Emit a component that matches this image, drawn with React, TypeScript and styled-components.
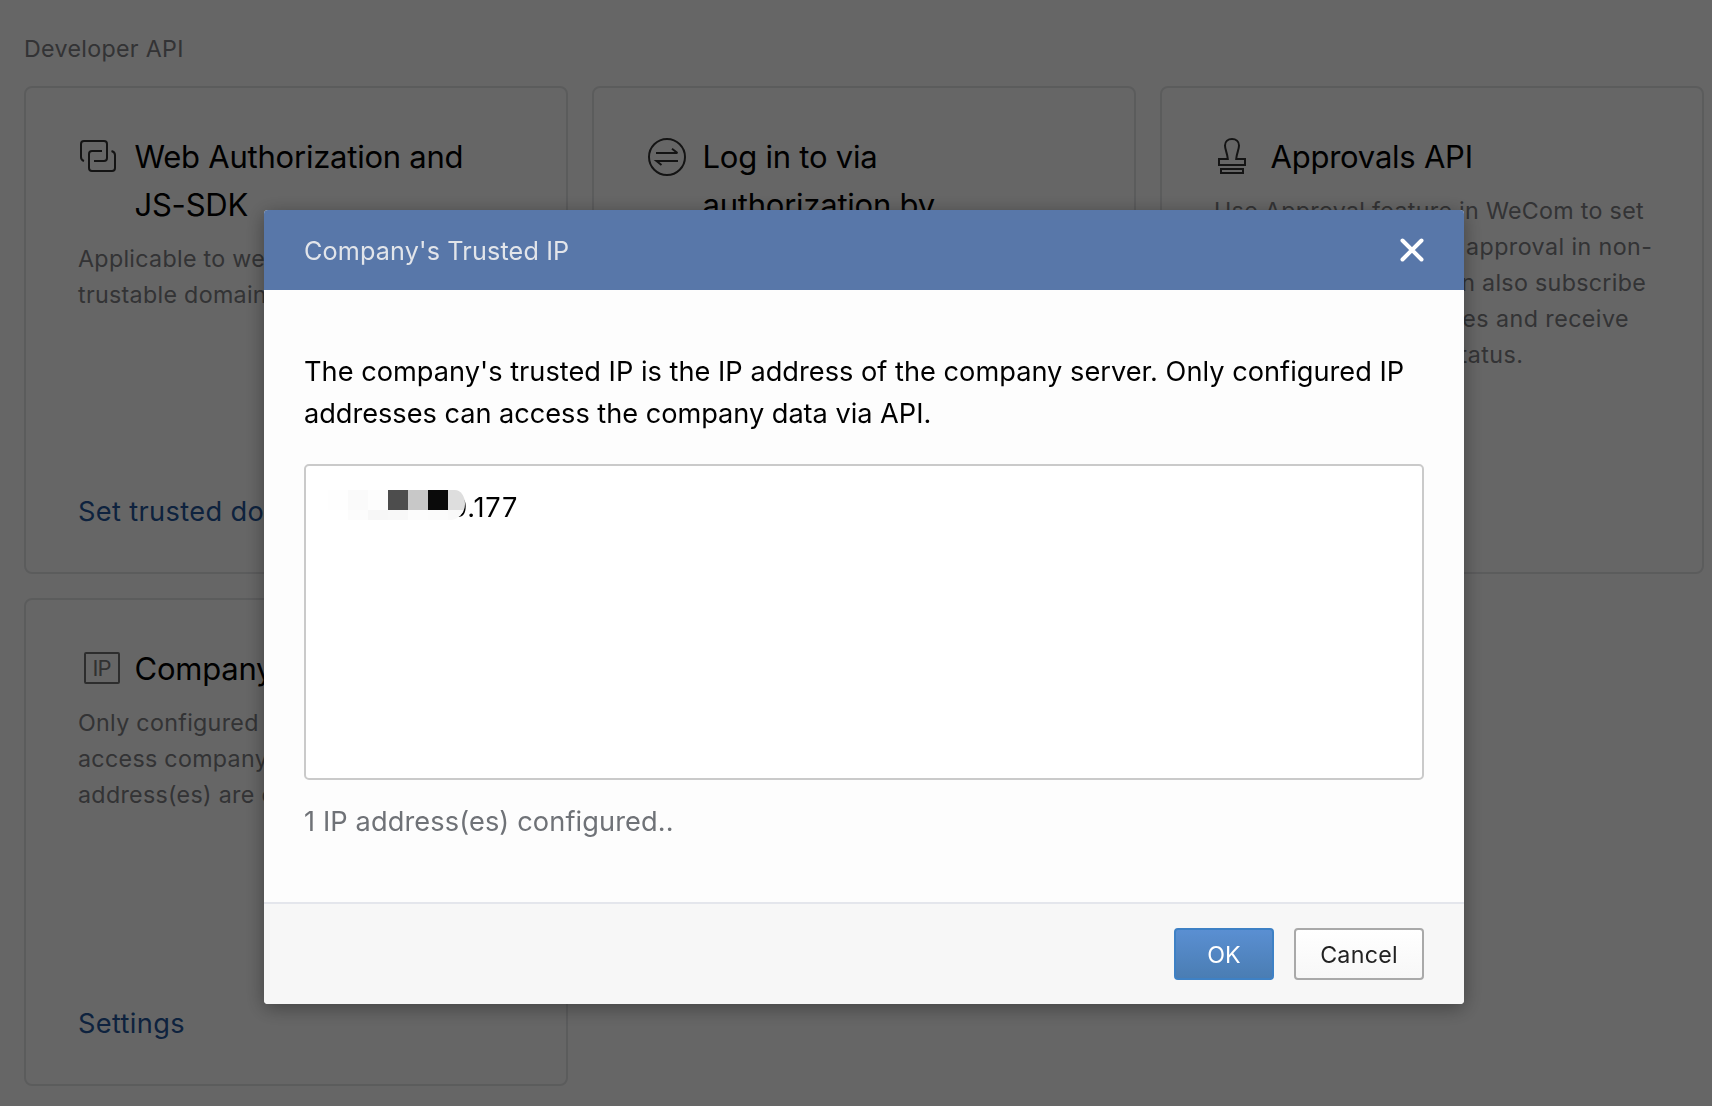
import React from "react";
import styled, { createGlobalStyle } from "styled-components";

const GlobalStyle = createGlobalStyle`
  *, *::before, *::after { box-sizing: border-box; }
  html, body { margin: 0; padding: 0; background: #fff; overflow: hidden; }
  body { font-family: Inter, "Liberation Sans", sans-serif; color: #000; }
  p, h1, h2, h3 { margin: 0; font-weight: 400; }
`;

const Page = styled.main`
  height: 1106px;
  padding: 31px 8px 0 24px;
  overflow: hidden;
`;

const SectionTitle = styled.h1`
  height: 36px;
  margin-bottom: 19px;
  font-size: 23.25px;
  line-height: 36px;
  letter-spacing: 0.3px;
  color: #808184;
`;

const CardGrid = styled.div`
  display: grid;
  grid-template-columns: repeat(3, 544px);
  grid-auto-rows: 488px;
  gap: 24px;
`;

const Card = styled.section`
  display: flex;
  flex-direction: column;
  padding: 45px 50px 40px 52px;
  border: 2px solid #e4e5e7;
  border-radius: 8px;
`;

const CardHead = styled.div`
  display: flex;
  align-items: flex-start;
  gap: 16px;
  margin-bottom: 12px;
`;

const IconSvg = styled.svg`
  flex: none;
  width: 40px;
  height: 40px;
  margin-top: 3px;
  fill: none;
  stroke: #333;
  stroke-width: 2;
`;

const IpBadge = styled.span`
  flex: none;
  display: flex;
  align-items: center;
  justify-content: center;
  width: 36px;
  height: 32px;
  margin: 7px -2px 0 6px;
  padding-right: 1px;
  border: 2px solid #727272;
  border-radius: 2px;
  font-size: 22px;
  letter-spacing: -1px;
  color: #7c7c7c;
`;

const CardTitle = styled.h2`
  padding-left: 0.5px;
  font-size: 31px;
  line-height: 48px;
  letter-spacing: -0.23px;
  white-space: nowrap;
`;

const Description = styled.p`
  font-size: 23.25px;
  line-height: 36px;
  letter-spacing: 0.3px;
  white-space: nowrap;
  color: #808184;
`;

const Line = styled.span<{ $spacing?: number }>`
  display: block;
  letter-spacing: ${(p) => (p.$spacing === undefined ? "inherit" : `${p.$spacing}px`)};
`;

const CardLink = styled.a`
  margin-top: auto;
  font-size: 27.2px;
  line-height: 40px;
  letter-spacing: 0.36px;
  white-space: nowrap;
  color: #25569b;
`;

const Overlay = styled.div`
  position: fixed;
  inset: 0;
  display: flex;
  justify-content: center;
  align-items: flex-start;
  padding: 210px 0 0 16px;
  background: rgba(0, 0, 0, 0.6);
`;

const Dialog = styled.div`
  width: 1200px;
  border-radius: 4px;
  overflow: hidden;
  background: #fdfdfd;
  box-shadow: 0 4px 20px rgba(0, 0, 0, 0.36);
`;

const DialogHeader = styled.header`
  display: flex;
  align-items: center;
  justify-content: space-between;
  height: 80px;
  padding: 0 40px;
  background: #5877a9;
`;

const DialogTitle = styled.h2`
  padding-top: 2px;
  font-size: 25.2px;
  letter-spacing: 0.14px;
  color: #e2e5ea;
`;

const CloseButton = styled.button`
  display: flex;
  padding: 0;
  border: 0;
  background: none;
`;

const DialogBody = styled.div`
  height: 612px;
  padding: 61px 40px 0;
`;

const Intro = styled.p`
  font-size: 27.2px;
  line-height: 42px;
  white-space: nowrap;
`;

const IpField = styled.div`
  display: flex;
  height: 316px;
  margin: 29px 0 21px;
  padding: 24px 22px;
  border: 2px solid #cacaca;
  border-radius: 5px;
  background: #fff;
`;

const Masked = styled.span`
  display: grid;
  grid-template-columns: repeat(7, 20px);
  grid-template-rows: 20px 10px;
  width: 137px;
  height: 30px;
  border-radius: 0 10px 15px 0 / 0 14px 16px 0;
  overflow: hidden;
  z-index: 1;
`;

const Cell = styled.i<{ $tone: string }>`
  background: ${(p) => p.$tone};
`;

const IpTail = styled.span`
  margin: 1px 0 0 -14.5px;
  font-size: 27.2px;
  line-height: 34px;
  letter-spacing: 0.7px;
`;

const Hint = styled.p`
  font-size: 27.2px;
  line-height: 42px;
  letter-spacing: 0.11px;
  color: #6f7277;
`;

const DialogFooter = styled.footer`
  display: flex;
  justify-content: flex-end;
  gap: 20px;
  height: 102px;
  padding: 24px 40px;
  border-top: 2px solid #e4e6ec;
  background: #f7f7f7;
`;

const Button = styled.button<{ $primary?: boolean }>`
  width: ${(p) => (p.$primary ? 100 : 130)}px;
  height: 52px;
  padding: 0;
  border: 2px solid ${(p) => (p.$primary ? "#3e81c5" : "#a9a9a9")};
  border-radius: 4px;
  background: ${(p) =>
    p.$primary ? "linear-gradient(#5a8fd2, #4a7db3)" : "linear-gradient(#fff, #f7f7f7)"};
  color: ${(p) => (p.$primary ? "#fff" : "#222")};
  font-family: inherit;
  font-size: 23.25px;
  letter-spacing: ${(p) => (p.$primary ? 0 : 0.25)}px;
`;

const MASK_TONES = [
  "#fefefe", "#fafafa", "#fdfdfd", "#4d4d4d", "#c8c8c8", "#0a0a0a", "#dedede",
  "#ffffff", "#fcfcfc", "#f7f7f7", "#f8f8f8", "#fcfcfc", "#fbfbfb", "#f9f9f9",
];

const LinkedSquaresIcon = () => (
  <IconSvg viewBox="0 0 40 40">
    <path d="M6 25 Q3 24 3 21 V8 Q3 5 6 5 H26 Q29 5 29 8 V22 Q29 25 26 25 H16" />
    <path d="M24 15 H14 Q11 15 11 18 V32 Q11 35 14 35 H34 Q37 35 37 32 V19 Q37 16 33.5 15" />
  </IconSvg>
);

const SwapIcon = () => (
  <IconSvg viewBox="0 0 40 40">
    <circle cx="21" cy="21" r="18" />
    <path d="M10 17 H31.5 M26 12.8 L31.5 17 M32 25 H10.5 L15.5 29" />
  </IconSvg>
);

const StampIcon = () => (
  <IconSvg viewBox="0 0 40 40">
    <path d="M13.8 23 C13.4 17.5 11 13.5 11 9.5 C11 5.5 14 3 18 3 C22 3 25 5.5 25 9.5 C25 13.5 22.6 17.5 22.2 23 H31 V29 H5 V23 Z" />
    <path d="M7 33 H29 V37 H7 Z" />
  </IconSvg>
);

const CloseIcon = () => (
  <svg width="24" height="24" viewBox="0 0 24 24" stroke="#fff" strokeWidth="4" strokeLinecap="round">
    <path d="M2.5 2.5 L21.5 21.5 M21.5 2.5 L2.5 21.5" />
  </svg>
);

export default function App() {
  return (
    <>
      <GlobalStyle />
      <Page>
        <SectionTitle>Developer API</SectionTitle>
        <CardGrid>
          <Card>
            <CardHead>
              <LinkedSquaresIcon />
              <CardTitle>Web Authorization and<br />JS-SDK</CardTitle>
            </CardHead>
            <Description>Applicable to web pages with<br />trustable domains.</Description>
            <CardLink>Set trusted domain</CardLink>
          </Card>
          <Card>
            <CardHead>
              <SwapIcon />
              <CardTitle>Log in to via<br />authorization by</CardTitle>
            </CardHead>
          </Card>
          <Card>
            <CardHead>
              <StampIcon />
              <CardTitle>Approvals API</CardTitle>
            </CardHead>
            <Description>
              <Line>Use Approval feature in WeCom to set</Line>
              <Line $spacing={0.42}>up and operate forms approval in non-</Line>
              <Line>WeCom apps.{"\u00a0"} You can also subscribe</Line>
              <Line $spacing={0.44}>to the template changes and receive</Line>
              <Line $spacing={0.47}>updates of the form status.</Line>
            </Description>
          </Card>
          <Card>
            <CardHead>
              <IpBadge>IP</IpBadge>
              <CardTitle>Company's Trusted IP</CardTitle>
            </CardHead>
            <Description>Only configured IPs can<br />access company data. 1 IP<br />address(es) are configured.</Description>
            <CardLink>Settings</CardLink>
          </Card>
        </CardGrid>
      </Page>
      <Overlay>
        <Dialog role="dialog">
          <DialogHeader>
            <DialogTitle>Company's Trusted IP</DialogTitle>
            <CloseButton aria-label="Close"><CloseIcon /></CloseButton>
          </DialogHeader>
          <DialogBody>
            <Intro>
              <Line $spacing={0.01}>The company's trusted IP is the IP address of the company server. Only configured IP</Line>
              <Line $spacing={-0.035}>addresses can access the company data via API.</Line>
            </Intro>
            <IpField>
              <Masked>
                {MASK_TONES.map((tone, i) => <Cell key={i} $tone={tone} />)}
              </Masked>
              <IpTail>9.177</IpTail>
            </IpField>
            <Hint>1 IP address(es) configured..</Hint>
          </DialogBody>
          <DialogFooter>
            <Button $primary>OK</Button>
            <Button>Cancel</Button>
          </DialogFooter>
        </Dialog>
      </Overlay>
    </>
  );
}
